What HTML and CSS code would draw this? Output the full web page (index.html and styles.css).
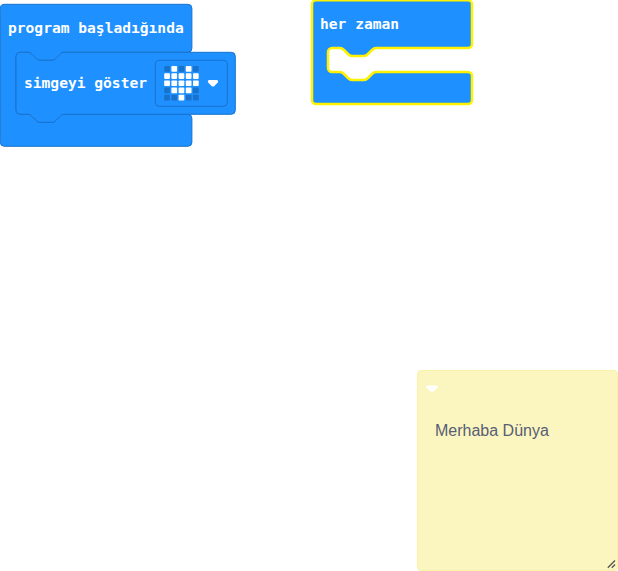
FILE: index.html
```
<!DOCTYPE html>
<html lang="tr">
<head>
<meta charset="utf-8">
<title>Program</title>
<link rel="stylesheet" href="styles.css">
</head>
<body>
<main class="workspace">
  <svg class="blocks" width="618" height="160" viewBox="0 0 618 160">
    <g class="block">
      <path d="M4.300 4.300H187.900a4 4 0 0 1 4 4V48.300a4 4 0 0 1-4 4H64c-2 0-3 1-4 2l-4 4c-1 1-2 2-4 2H40c-2 0-3-1-4-2l-4-4c-1-1-2-2-4-2H20a4 4 0 0 0-4 4V110.300a4 4 0 0 0 4 4H28c2 0 3 1 4 2l4 4c1 1 2 2 4 2H52c2 0 3-1 4-2l4-4c1-1 2-2 4-2H187.900a4 4 0 0 1 4 4V142.300a4 4 0 0 1-4 4H4.300a4 4 0 0 1-4-4V8.300a4 4 0 0 1 4-4z"/>
      <path d="M20 52.300H28c2 0 3 1 4 2l4 4c1 1 2 2 4 2H52c2 0 3-1 4-2l4-4c1-1 2-2 4-2H231.300a4 4 0 0 1 4 4V110.300a4 4 0 0 1-4 4H64c-2 0-3 1-4 2l-4 4c-1 1-2 2-4 2H40c-2 0-3-1-4-2l-4-4c-1-1-2-2-4-2H20a4 4 0 0 1-4-4V56.300a4 4 0 0 1 4-4z"/>
      <rect x="155.300" y="60.300" width="72" height="46" rx="4"/>
    </g>
    <text class="label" x="8" y="33">program başladığında</text>
    <text class="label" x="24" y="88">simgeyi göster</text>
    <g class="led-off">
      <rect x="164.200" y="66" width="5.700" height="5.700" rx=".8"/>
      <rect x="178.600" y="66" width="5.700" height="5.700" rx=".8"/>
      <rect x="193" y="66" width="5.700" height="5.700" rx=".8"/>
      <rect x="164.200" y="87.600" width="5.700" height="5.700" rx=".8"/>
      <rect x="193" y="87.600" width="5.700" height="5.700" rx=".8"/>
      <rect x="164.200" y="94.800" width="5.700" height="5.700" rx=".8"/>
      <rect x="171.400" y="94.800" width="5.700" height="5.700" rx=".8"/>
      <rect x="185.800" y="94.800" width="5.700" height="5.700" rx=".8"/>
      <rect x="193" y="94.800" width="5.700" height="5.700" rx=".8"/>
    </g>
    <g class="led-on">
      <rect x="171.400" y="66" width="5.700" height="5.700" rx=".8"/>
      <rect x="185.800" y="66" width="5.700" height="5.700" rx=".8"/>
      <rect x="164.200" y="73.200" width="5.700" height="5.700" rx=".8"/>
      <rect x="171.400" y="73.200" width="5.700" height="5.700" rx=".8"/>
      <rect x="178.600" y="73.200" width="5.700" height="5.700" rx=".8"/>
      <rect x="185.800" y="73.200" width="5.700" height="5.700" rx=".8"/>
      <rect x="193" y="73.200" width="5.700" height="5.700" rx=".8"/>
      <rect x="164.200" y="80.400" width="5.700" height="5.700" rx=".8"/>
      <rect x="171.400" y="80.400" width="5.700" height="5.700" rx=".8"/>
      <rect x="178.600" y="80.400" width="5.700" height="5.700" rx=".8"/>
      <rect x="185.800" y="80.400" width="5.700" height="5.700" rx=".8"/>
      <rect x="193" y="80.400" width="5.700" height="5.700" rx=".8"/>
      <rect x="171.400" y="87.600" width="5.700" height="5.700" rx=".8"/>
      <rect x="178.600" y="87.600" width="5.700" height="5.700" rx=".8"/>
      <rect x="185.800" y="87.600" width="5.700" height="5.700" rx=".8"/>
      <rect x="178.600" y="94.800" width="5.700" height="5.700" rx=".8"/>
    </g>
    <path class="arrow" d="M209 80h8q2 1 .6 2.800l-3.200 3.100q-1.400 1-2.800 0l-3.200-3.100q-1.400-1.800.6-2.800z"/>

    <path class="selected" d="M316 .3H468a4 4 0 0 1 4 4V44a4 4 0 0 1-4 4H376c-2 0-3 1-4 2l-4 4c-1 1-2 2-4 2H352c-2 0-3-1-4-2l-4-4c-1-1-2-2-4-2H332a4 4 0 0 0-4 4V68a4 4 0 0 0 4 4H340c2 0 3 1 4 2l4 4c1 1 2 2 4 2H364c2 0 3-1 4-2l4-4c1-1 2-2 4-2H468a4 4 0 0 1 4 4V100a4 4 0 0 1-4 4H316a4 4 0 0 1-4-4V4.300a4 4 0 0 1 4-4z"/>
    <text class="label" x="320" y="29">her zaman</text>
  </svg>

  <section class="note">
    <svg class="note-toggle" width="14" height="8" viewBox="0 0 14 8">
      <path class="arrow" d="M2 .5h10q2 .5.700 2L8.400 6.600q-1.400 1-2.800 0L1.300 2.500Q0 1 2 .5z"/>
    </svg>
    <p class="note-text">Merhaba Dünya</p>
    <svg class="note-grip" width="9" height="9" viewBox="0 0 9 9">
      <path d="M.8 7.700L8 .5M4.800 7.700L8 4.500"/>
    </svg>
  </section>
</main>
</body>
</html>
```
FILE: styles.css
```
body {
  margin: 0;
  background: #fff;
}

.workspace {
  position: relative;
  width: 618px;
  height: 571px;
  overflow: hidden;
}

.blocks {
  display: block;
}

.block {
  fill: #1e90ff;
  stroke: #1872cc;
  stroke-width: 1;
}

.selected {
  fill: #1e90ff;
  stroke: #fff200;
  stroke-width: 2.5;
}

.label {
  font: bold 14.6px "DejaVu Sans Mono", monospace;
  fill: #fff;
}

.led-off {
  fill: #1872cc;
}

.led-on,
.arrow {
  fill: #fff;
}

.note {
  position: absolute;
  left: 417px;
  top: 370px;
  box-sizing: border-box;
  width: 201px;
  height: 201px;
  padding: 14px 8px 0 7px;
  border: 1px solid #faf2a6;
  border-radius: 4px;
  background: #fbf5bf;
}

.note-toggle {
  display: block;
}

.note-text {
  margin: 28px 0 0 10px;
  font: 16px/20px "Liberation Sans", Arial, sans-serif;
  color: #575e75;
}

.note-grip {
  position: absolute;
  right: 1px;
  bottom: 1px;
  fill: none;
  stroke: #555;
  stroke-width: 1.3;
}
```
